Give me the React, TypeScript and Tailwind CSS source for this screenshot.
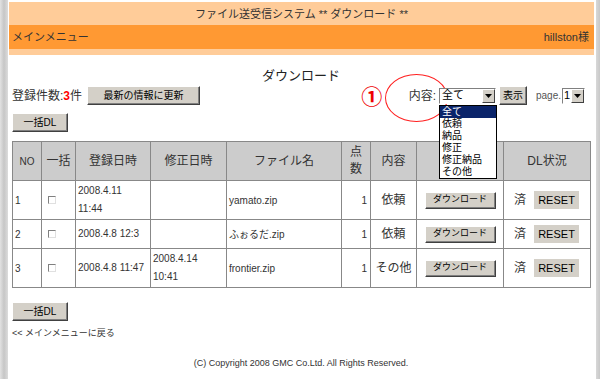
import React from "react";

const btn3d =
  "flex items-center justify-center bg-[#d4d0c8] border border-t-white border-l-white border-r-[#404040] border-b-[#404040] shadow-[inset_-1px_-1px_0_#808080] text-black";

function Btn({ w, h, children, cls = "" }: { w: string; h: string; children: React.ReactNode; cls?: string }) {
  return <div className={`${btn3d} ${w} ${h} ${cls}`}>{children}</div>;
}

function Arrow() {
  return (
    <div className="flex h-full w-[13px] items-center justify-center bg-[#d4d0c8] border border-t-white border-l-white border-r-[#404040] border-b-[#404040]">
      <svg width="7" height="4" viewBox="0 0 7 4">
        <path d="M0 0 H7 L3.5 4 Z" fill="#000" />
      </svg>
    </div>
  );
}

function Checkbox() {
  return (
    <div className="ml-[6px] h-[8px] w-[8px] border border-t-[#808080] border-l-[#808080] border-r-[#e0e0e0] border-b-[#e0e0e0] bg-white" />
  );
}

const rows = [
  { no: "1", reg: ["2008.4.11", "11:44"], mod: [] as string[], file: "yamato.zip", kind: "依頼", h: "h-[39px]" },
  { no: "2", reg: ["2008.4.8 12:3"], mod: [] as string[], file: "ふぉるだ.zip", kind: "依頼", h: "h-[29px]" },
  { no: "3", reg: ["2008.4.8 11:47"], mod: ["2008.4.14", "10:41"], file: "frontier.zip", kind: "その他", h: "h-[39px]" },
];

const td = "border border-[#888] align-middle p-0";
const opt = "flex h-[12px] shrink-0 items-center overflow-hidden pl-[2px] text-[10px] leading-none";

export default function App() {
  return (
    <div className="flex h-[379px] w-[600px] overflow-hidden bg-white text-[#333] [font-family:'Liberation_Sans','Noto_Sans_CJK_JP',sans-serif]">
      <div className="h-full w-[8px] bg-gradient-to-r from-[#e2e2e2] via-[#c6c6c6] to-[#dcdcdc]" />
      <div className="h-full w-[1px] bg-white" />
      <div className="flex h-full w-[585px] flex-col">
        <div className="h-[2px] bg-white" />
        <div className="flex h-[23px] items-center justify-center bg-[#ffcc99] pt-[2px] text-[11px]">
          ファイル送受信システム ** ダウンロード **
        </div>
        <div className="flex h-[24px] items-center justify-between bg-[#ff9933] pl-[3px] pr-[5px] text-[11px]">
          <span>メインメニュー</span>
          <span>hillston様</span>
        </div>
        <div className="h-[6px] bg-[#ffcc99]" />

        <div className="flex flex-col pl-[3px] pr-[4px]">
          <div className="mt-[13px] flex h-[16px] items-center justify-center text-[13px] text-[#222]">ダウンロード</div>

          <div className="mt-[2px] flex h-[19px] items-center justify-between">
            <div className="flex items-center">
              <span className="text-[12px]">登録件数:</span>
              <span className="text-[12px] font-bold text-[#ff0000]">3</span>
              <span className="text-[12px]">件</span>
              <Btn w="w-[113px]" h="h-[19px]" cls="ml-[5px] text-[10px]">最新の情報に更新</Btn>
            </div>
            <div className="relative mr-[5px] flex items-center">
              <div className="absolute left-[23px] top-[-12px] h-[48px] w-[63px] rounded-[50%] border border-[#ff2020]" />
              <span className="flex h-[20px] w-[20px] items-center justify-center text-[21px] font-bold leading-none text-[#ee0000] [font-family:'Noto_Sans_CJK_JP',sans-serif]">①</span>
              <span className="ml-[27px] text-[12px]">内容:</span>
              <div className="relative ml-[3px] flex h-[16px] w-[57px] items-stretch border border-t-[#808080] border-l-[#808080] border-r-white border-b-white bg-white">
                <span className="flex flex-1 items-center pl-[2px] text-[11px] leading-none text-black">全て</span>
                <Arrow />
                <div className="absolute left-[-1px] top-[16px] z-10 flex w-[58px] flex-col border border-black bg-white text-black">
                  <div className={`${opt} bg-[#0a246a] text-white`}>全て</div>
                  <div className={opt}>依頼</div>
                  <div className={opt}>納品</div>
                  <div className={opt}>修正</div>
                  <div className={opt}>修正納品</div>
                  <div className={`${opt} h-[11px]`}>その他</div>
                </div>
              </div>
              <Btn w="w-[28px]" h="h-[19px]" cls="ml-[3px] text-[10px]">表示</Btn>
              <span className="ml-[9px] text-[10px] text-[#555]">page.</span>
              <div className="ml-[1px] flex h-[16px] w-[23px] items-stretch border border-t-[#808080] border-l-[#808080] border-r-white border-b-white bg-white">
                <span className="flex flex-1 items-center pl-[1px] text-[11px] leading-none text-black">1</span>
                <Arrow />
              </div>
            </div>
          </div>

          <Btn w="w-[56px]" h="h-[19px]" cls="mt-[8px] text-[10px]">一括DL</Btn>

          <table className="mt-[9px] w-[578px] table-fixed border-collapse border border-[#888]">
            <colgroup>
              <col className="w-[29px]" />
              <col className="w-[34px]" />
              <col className="w-[75px]" />
              <col className="w-[76px]" />
              <col className="w-[115px]" />
              <col className="w-[29px]" />
              <col className="w-[46px]" />
              <col className="w-[87px]" />
              <col className="w-[87px]" />
            </colgroup>
            <thead>
              <tr className="h-[39px] bg-[#cccccc] text-[12px] font-normal">
                <th className={`${td} text-[10px] font-normal`}>NO</th>
                <th className={`${td} font-normal`}>一括</th>
                <th className={`${td} font-normal`}>登録日時</th>
                <th className={`${td} font-normal`}>修正日時</th>
                <th className={`${td} font-normal`}>ファイル名</th>
                <th className={`${td} font-normal leading-[17px]`}>点<br />数</th>
                <th className={`${td} font-normal`}>内容</th>
                <th className={`${td} font-normal`}></th>
                <th className={`${td} font-normal`}>DL状況</th>
              </tr>
            </thead>
            <tbody>
              {rows.map((r) => (
                <tr key={r.no} className={r.h}>
                  <td className={`${td} pl-[2px] text-[10px]`}>{r.no}</td>
                  <td className={td}><Checkbox /></td>
                  <td className={`${td} pl-[2px] text-[10px] leading-[18px]`}>
                    {r.reg.map((l, i) => <div key={i}>{l}</div>)}
                  </td>
                  <td className={`${td} pl-[2px] text-[10px] leading-[18px]`}>
                    {r.mod.map((l, i) => <div key={i}>{l}</div>)}
                  </td>
                  <td className={`${td} pl-[2px] text-[10px]`}>{r.file}</td>
                  <td className={`${td} pr-[3px] text-right text-[10px]`}>1</td>
                  <td className={`${td} text-center text-[12px]`}>{r.kind}</td>
                  <td className={td}>
                    <div className="flex justify-center">
                      <Btn w="w-[71px]" h="h-[17px]" cls="text-[9px]">ダウンロード</Btn>
                    </div>
                  </td>
                  <td className={td}>
                    <div className="flex items-center pl-[10px]">
                      <span className="text-[12px]">済</span>
                      <div className="ml-[8px] flex h-[18px] w-[45px] items-center justify-center bg-[#d4d0c8] text-[11px] text-black">RESET</div>
                    </div>
                  </td>
                </tr>
              ))}
            </tbody>
          </table>

          <Btn w="w-[56px]" h="h-[19px]" cls="mt-[14px] text-[10px]">一括DL</Btn>
          <div className="mt-[6px] text-[9px] leading-[12px]">&lt;&lt; メインメニューに戻る</div>
          <div className="mt-[18px] text-center text-[9px] leading-[12px]">(C) Copyright 2008 GMC Co.Ltd. All Rights Reserved.</div>
        </div>
      </div>
      <div className="h-full w-[2px] bg-white" />
      <div className="h-full w-[4px] bg-gradient-to-r from-[#d8d8d8] to-[#c8c8c8]" />
    </div>
  );
}
